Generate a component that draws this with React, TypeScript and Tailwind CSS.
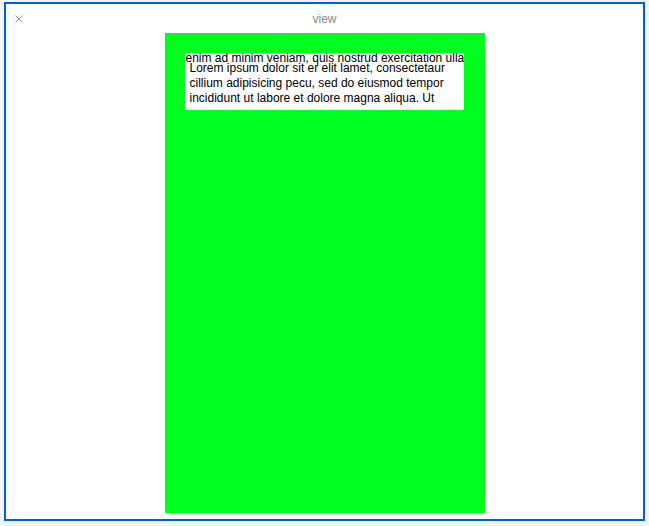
export default function App() {
  return (
    <div
      className="w-[649px] h-[526px] bg-[#f5f5f5] pl-[4px] pt-[2px]"
      style={{ fontFamily: '"Liberation Sans", Arial, sans-serif' }}
    >
      <div className="w-[641px] h-[519px] border-2 border-[#005fdb] bg-white flex flex-col">
        {/* Title bar */}
        <div className="relative h-[29px] flex items-center justify-center shrink-0">
          <svg
            className="absolute left-[9px] top-[11px]"
            width="8"
            height="8"
            viewBox="0 0 8 8"
            fill="none"
          >
            <path d="M0.5 0.5L7.5 7.5M7.5 0.5L0.5 7.5" stroke="#9a9a9a" strokeWidth="1" />
          </svg>
          <span className="text-[12px] leading-none text-[#8a8a8a]">view</span>
        </div>

        {/* Device view */}
        <div className="mx-auto w-[320px] h-[480px] bg-[#00ff21] pt-[20px] pl-[20px]">
          <div className="relative w-[279px] h-[57px] bg-white overflow-hidden text-[12px] text-black">
            <div className="absolute top-[-3px] left-[1px] whitespace-nowrap leading-4">
              enim ad minim veniam, quis nostrud exercitation ullamco laboris
            </div>
            <p className="pt-[8px] pl-[5px] pr-[3px] leading-[15px]">
              Lorem ipsum dolor sit er elit lamet, consectetaur cillium adipisicing pecu, sed do
              eiusmod tempor incididunt ut labore et dolore magna aliqua. Ut
            </p>
          </div>
        </div>
      </div>
    </div>
  );
}
